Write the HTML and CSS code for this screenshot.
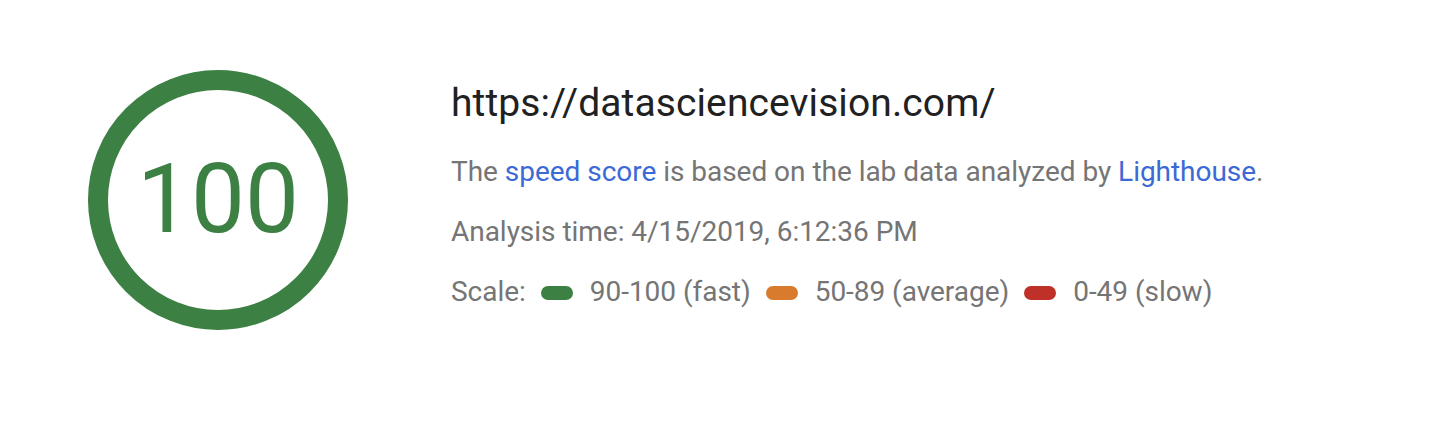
FILE: index.html
```html
<!DOCTYPE html>
<html lang="en">
<head>
<meta charset="utf-8">
<title>PageSpeed score</title>
<link rel="stylesheet" href="styles.css">
</head>
<body>
<main class="card">
  <div class="gauge">
    <svg class="gauge-ring" width="260" height="260" viewBox="0 0 260 260" aria-hidden="true">
      <circle cx="130" cy="130" r="120" fill="none" stroke="#3d8043" stroke-width="20"/>
    </svg>
    <span class="gauge-value">100</span>
  </div>
  <section class="summary">
    <h1 class="url">https://datasciencevision.com/</h1>
    <p class="line">The <a class="link" href="#">speed score</a> is based on the lab data analyzed by <a class="link" href="#">Lighthouse</a>.</p>
    <p class="line">Analysis time: 4/15/2019, 6:12:36 PM</p>
    <p class="line scale">Scale:<span class="pill pill-fast"></span>90-100 (fast)<span class="pill pill-average"></span>50-89 (average)<span class="pill pill-slow"></span>0-49 (slow)</p>
  </section>
</main>
</body>
</html>
```

FILE: styles.css
```css
html, body {
  margin: 0;
  padding: 0;
  background: #ffffff;
}

body {
  font-family: Roboto, "Liberation Sans", Arial, sans-serif;
  color: #757575;
}

.card {
  display: flex;
  align-items: flex-start;
  padding: 70px 0 0 88px;
  gap: 103px;
}

.gauge {
  display: grid;
  place-items: center;
  width: 260px;
  height: 260px;
}

.gauge-ring,
.gauge-value {
  grid-area: 1 / 1;
}

.gauge-ring {
  display: block;
}

.gauge-value {
  font-size: 96px;
  line-height: 1;
  color: #3d8043;
  font-weight: 400;
  padding-bottom: 2px;
}

.summary {
  padding-top: 9px;
}

.url {
  margin: 0 0 15px;
  font-size: 39px;
  line-height: 48px;
  font-weight: 400;
  color: #212121;
  letter-spacing: 0.1px;
}

.line {
  margin: 0;
  font-size: 28px;
  line-height: 60px;
  white-space: nowrap;
  letter-spacing: -0.03px;
}

.link {
  color: #3b6ad6;
  text-decoration: none;
}

.pill {
  display: inline-block;
  width: 32px;
  height: 14px;
  border-radius: 7px;
  margin: 0 17px 0 15px;
  vertical-align: middle;
  position: relative;
  top: -1px;
}

.pill-fast { background: #3d8043; }
.pill-average { background: #d97b2c; }
.pill-slow { background: #bf3128; }
```
